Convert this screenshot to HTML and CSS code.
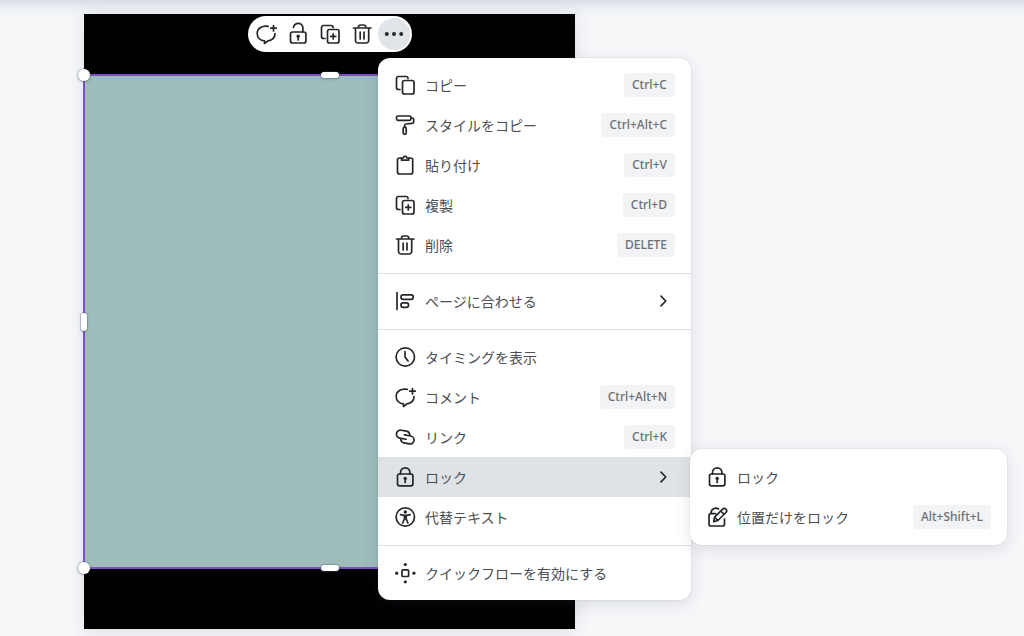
FILE: index.html
```html
<!DOCTYPE html>
<html lang="ja">
<head>
<meta charset="utf-8">
<meta name="viewport" content="width=device-width, initial-scale=1">
<title>デザインエディター</title>
<link rel="stylesheet" href="styles.css">
</head>
<body>
<svg class="sprite" aria-hidden="true">
  <symbol id="i-copy" viewBox="0 0 24 24"><path d="M7 16.5H5.500a2 2 0 0 1-2-2v-9a2 2 0 0 1 2-2h7.500a2 2 0 0 1 2 2"/><rect x="9.500" y="7.500" width="11.500" height="13.500" rx="2"/></symbol>
  <symbol id="i-duplicate" viewBox="0 0 24 24"><path d="M7 16.500H5.500a2 2 0 0 1-2-2v-9a2 2 0 0 1 2-2h7.500a2 2 0 0 1 2 2"/><rect x="9.500" y="7.500" width="11.500" height="13.500" rx="2"/><path d="M15.250 11.900v5M12.750 14.400h5"/></symbol>
  <symbol id="i-roller" viewBox="0 0 24 24"><rect x="3.500" y="3" width="14.500" height="4.300" rx="1.500"/><path d="M18 5h1.200c1 0 1.500.5 1.500 1.500v2.200c0 1-.6 1.500-1.500 1.600l-6.200.7c-.8.1-1.300.5-1.300 1.300V14"/><rect x="10.200" y="14" width="3" height="7.300" rx="1.500"/></symbol>
  <symbol id="i-paste" viewBox="0 0 24 24"><path d="M8.500 5h-2a2 2 0 0 0-2 2v12a2 2 0 0 0 2 2h11.200a2 2 0 0 0 2-2V7a2 2 0 0 0-2-2h-2"/><path d="M8.500 5h1.800c.2-1.200.9-1.800 1.800-1.800s1.600.6 1.800 1.800h1.800v2.200H8.500z"/></symbol>
  <symbol id="i-trash" viewBox="0 0 24 24"><path d="M3.500 6h17.500M8.500 6V5a2 2 0 0 1 2-2h3.200a2 2 0 0 1 2 2v1M5.500 6v12.500a2.500 2.500 0 0 0 2.500 2.500h8.200a2.500 2.500 0 0 0 2.500-2.500V6M10.200 10v7M14 10v7"/></symbol>
  <symbol id="i-align" viewBox="0 0 24 24"><path d="M4 3.500v17"/><rect x="8" y="5.800" width="12.200" height="4.500" rx="2"/><rect x="8" y="13.800" width="7.500" height="4.500" rx="2"/></symbol>
  <symbol id="i-clock" viewBox="0 0 24 24"><circle cx="12.300" cy="12" r="9.200"/><path d="M12 6.500V12l3 4"/></symbol>
  <symbol id="i-comment" viewBox="0 0 24 24"><path d="M14.200 4.300c-6-1.200-11 2-11 7.200 0 4.200 3.200 7 7.300 7.400v2.600l3.500-2.700c4.300-.7 7-3.500 7-7.300M19.500 3.500v5.400M16.800 6.200h5.400"/></symbol>
  <symbol id="i-link" viewBox="0 0 24 24"><g transform="rotate(10 12 12)"><path d="M13.500 14H7a4 4 0 0 1 0-8h5.500a4 4 0 0 1 3.800 3"/><path d="M11 10h6.500a4 4 0 0 1 0 8H12a4 4 0 0 1-3.800-3"/></g></symbol>
  <symbol id="i-lock" viewBox="0 0 24 24"><path d="M7.500 9V7.500a4.700 4.700 0 0 1 9.400 0V9"/><rect x="4.500" y="9" width="15.400" height="11.800" rx="2"/><path d="M12.200 14.500v3"/><circle class="dot" cx="12.200" cy="13.500" r="1.700"/></symbol>
  <symbol id="i-unlock" viewBox="0 0 24 24"><path d="M7.500 5.300a4.700 4.700 0 0 1 9.400 1.500V10"/><rect x="4.500" y="10" width="15.400" height="11" rx="2"/><path d="M12.200 15v3"/><circle class="dot" cx="12.200" cy="14.300" r="1.700"/></symbol>
  <symbol id="i-person" viewBox="0 0 24 24"><circle cx="12.300" cy="12" r="9.200"/><circle class="dot" cx="12.300" cy="7" r="1.700"/><path d="M7.500 9.700l3.300.7h3l3.300-.7M11.500 10.500v3l-1.800 4.500M13.100 10.500v3l1.800 4.500M12.300 10.500v3.500"/></symbol>
  <symbol id="i-flow" viewBox="0 0 24 24"><rect x="9" y="8.900" width="6.600" height="6.600" rx="1"/><circle class="dot" cx="12.300" cy="3.500" r="1.600"/><circle class="dot" cx="12.300" cy="20.800" r="1.600"/><circle class="dot" cx="3.700" cy="12.200" r="1.600"/><circle class="dot" cx="20.900" cy="12.200" r="1.600"/></symbol>
  <symbol id="i-position" viewBox="0 0 24 24"><path d="M6 8.700V8a4.800 4.800 0 0 1 7.500-4M10.500 8.700H6a2 2 0 0 0-2 2v8.300a2 2 0 0 0 2 2h11.500a2 2 0 0 0 2-2v-5M8.700 16.700l.9-4.500 8-8a2.300 2.300 0 0 1 3.300 3.300l-8 8zM15.800 6l3.300 3.300M9.800 12.500l3 2.800"/></symbol>
  <symbol id="i-chevron" viewBox="0 0 24 24"><path d="M10 7.200l4.800 4.800-4.800 4.800"/></symbol>
  <symbol id="i-more" viewBox="0 0 24 24"><circle class="dot" cx="4.800" cy="12" r="2"/><circle class="dot" cx="12" cy="12" r="2"/><circle class="dot" cx="19.200" cy="12" r="2"/></symbol>
</svg>

<main class="workspace">
  <div class="artboard">
    <div class="shape">
      <span class="handle corner top-left"></span>
      <span class="handle bar top"></span>
      <span class="handle pillar left"></span>
      <span class="handle corner bottom-left"></span>
      <span class="handle bar bottom"></span>
    </div>
    <div class="toolbar" role="toolbar" aria-label="要素ツール">
      <button class="tool" type="button" aria-label="コメント"><svg class="icon"><use href="#i-comment"/></svg></button>
      <button class="tool" type="button" aria-label="ロック"><svg class="icon"><use href="#i-unlock"/></svg></button>
      <button class="tool" type="button" aria-label="複製"><svg class="icon"><use href="#i-duplicate"/></svg></button>
      <button class="tool" type="button" aria-label="削除"><svg class="icon"><use href="#i-trash"/></svg></button>
      <button class="tool active" type="button" aria-label="もっと見る"><svg class="icon"><use href="#i-more"/></svg></button>
    </div>
  </div>

  <div class="menu context-menu" role="menu">
    <div class="group">
      <button class="item" type="button" role="menuitem"><svg class="icon"><use href="#i-copy"/></svg><span class="label">コピー</span><kbd>Ctrl+C</kbd></button>
      <button class="item" type="button" role="menuitem"><svg class="icon"><use href="#i-roller"/></svg><span class="label">スタイルをコピー</span><kbd>Ctrl+Alt+C</kbd></button>
      <button class="item" type="button" role="menuitem"><svg class="icon"><use href="#i-paste"/></svg><span class="label">貼り付け</span><kbd>Ctrl+V</kbd></button>
      <button class="item" type="button" role="menuitem"><svg class="icon"><use href="#i-duplicate"/></svg><span class="label">複製</span><kbd>Ctrl+D</kbd></button>
      <button class="item" type="button" role="menuitem"><svg class="icon"><use href="#i-trash"/></svg><span class="label">削除</span><kbd>DELETE</kbd></button>
    </div>
    <div class="group">
      <button class="item" type="button" role="menuitem"><svg class="icon"><use href="#i-align"/></svg><span class="label">ページに合わせる</span><svg class="icon"><use href="#i-chevron"/></svg></button>
    </div>
    <div class="group">
      <button class="item" type="button" role="menuitem"><svg class="icon"><use href="#i-clock"/></svg><span class="label">タイミングを表示</span></button>
      <button class="item" type="button" role="menuitem"><svg class="icon"><use href="#i-comment"/></svg><span class="label">コメント</span><kbd>Ctrl+Alt+N</kbd></button>
      <button class="item" type="button" role="menuitem"><svg class="icon"><use href="#i-link"/></svg><span class="label">リンク</span><kbd>Ctrl+K</kbd></button>
      <div class="submenu-anchor">
        <button class="item open" type="button" role="menuitem" aria-haspopup="menu" aria-expanded="true"><svg class="icon"><use href="#i-lock"/></svg><span class="label">ロック</span><svg class="icon"><use href="#i-chevron"/></svg></button>
        <div class="menu submenu" role="menu">
          <button class="item" type="button" role="menuitem"><svg class="icon"><use href="#i-lock"/></svg><span class="label">ロック</span></button>
          <button class="item" type="button" role="menuitem"><svg class="icon"><use href="#i-position"/></svg><span class="label">位置だけをロック</span><kbd>Alt+Shift+L</kbd></button>
        </div>
      </div>
      <button class="item" type="button" role="menuitem"><svg class="icon"><use href="#i-person"/></svg><span class="label">代替テキスト</span></button>
    </div>
    <div class="group">
      <button class="item" type="button" role="menuitem"><svg class="icon"><use href="#i-flow"/></svg><span class="label">クイックフローを有効にする</span></button>
    </div>
  </div>
</main>
</body>
</html>
```

FILE: styles.css
```css
* {
  box-sizing: border-box;
}

body {
  margin: 0;
  font-family: "Noto Sans CJK JP", "Noto Sans", sans-serif;
  font-size: 14px;
  color: #4b4e52;
}

.sprite {
  position: absolute;
  width: 0;
  height: 0;
}

.workspace {
  position: relative;
  min-height: 100vh;
  overflow: hidden;
  background: linear-gradient(#d9dee5, #eceff3 8px, #f6f7f9 18px);
}

.artboard {
  position: absolute;
  left: 84px;
  top: 14px;
  width: 491px;
  height: 615px;
  background: #000;
  box-shadow: 0 2px 16px rgba(60, 70, 90, 0.14);
}

.shape {
  position: absolute;
  left: -1px;
  right: -1px;
  top: 60px;
  height: 495px;
  background: #9dbcba;
  border: 2px solid #7d4fc4;
}

.handle {
  position: absolute;
  background: #fff;
  box-shadow: 0 0 0 1px rgba(57, 76, 96, 0.25), 0 1px 3px rgba(57, 76, 96, 0.3);
}

.corner {
  width: 12px;
  height: 12px;
  border-radius: 50%;
}

.bar {
  left: calc(50% - 9px);
  width: 18px;
  height: 6px;
  border-radius: 3px;
}

.pillar {
  top: calc(50% - 9px);
  width: 6px;
  height: 18px;
  border-radius: 3px;
}

.left {
  left: -4px;
}

.top {
  top: -4px;
}

.bottom {
  bottom: -4px;
}

.top-left {
  left: -7px;
  top: -7px;
}

.bottom-left {
  left: -7px;
  bottom: -7px;
}

.toolbar {
  position: absolute;
  top: 2px;
  left: 50%;
  transform: translateX(-50%);
  display: flex;
  padding: 2px;
  border-radius: 18px;
  background: #fff;
}

.tool {
  display: grid;
  place-items: center;
  width: 32px;
  height: 32px;
  padding: 0;
  border: 0;
  border-radius: 50%;
  background: none;
}

.tool.active {
  background: #e1e4e8;
}

.icon {
  flex: none;
  width: 24px;
  height: 24px;
  fill: none;
  stroke: #23272b;
  stroke-width: 1.7;
  stroke-linecap: round;
  stroke-linejoin: round;
}

.dot {
  fill: #23272b;
  stroke: none;
}

.menu {
  position: absolute;
  border-radius: 12px;
  background: #fff;
  box-shadow: 0 0 0 1px rgba(64, 70, 90, 0.05), 0 4px 16px rgba(57, 66, 90, 0.14);
}

.context-menu {
  left: 378px;
  top: 58px;
  width: 313px;
}

.group {
  padding: 7px 0 8px;
}

.group + .group {
  border-top: 1px solid #dcdfe2;
}

.group:last-child {
  padding-bottom: 7px;
}

.item {
  display: flex;
  align-items: center;
  gap: 8px;
  width: 100%;
  height: 40px;
  padding: 0 16px 0 15px;
  border: 0;
  background: none;
  color: inherit;
  font: inherit;
  text-align: left;
}

.item.open {
  background: #e0e3e6;
}

.label {
  flex: 1;
  padding-bottom: 1px;
  line-height: 20px;
  white-space: nowrap;
}

kbd {
  padding: 0 8px;
  border-radius: 4px;
  background: #f2f3f5;
  color: #6b6f75;
  font-family: "Noto Sans", sans-serif;
  font-size: 12px;
  font-weight: 500;
  line-height: 24px;
}

.submenu-anchor {
  position: relative;
}

.submenu {
  left: calc(100% - 1px);
  top: -8px;
  z-index: 1;
  width: 317px;
  padding: 8px 0;
}
```
